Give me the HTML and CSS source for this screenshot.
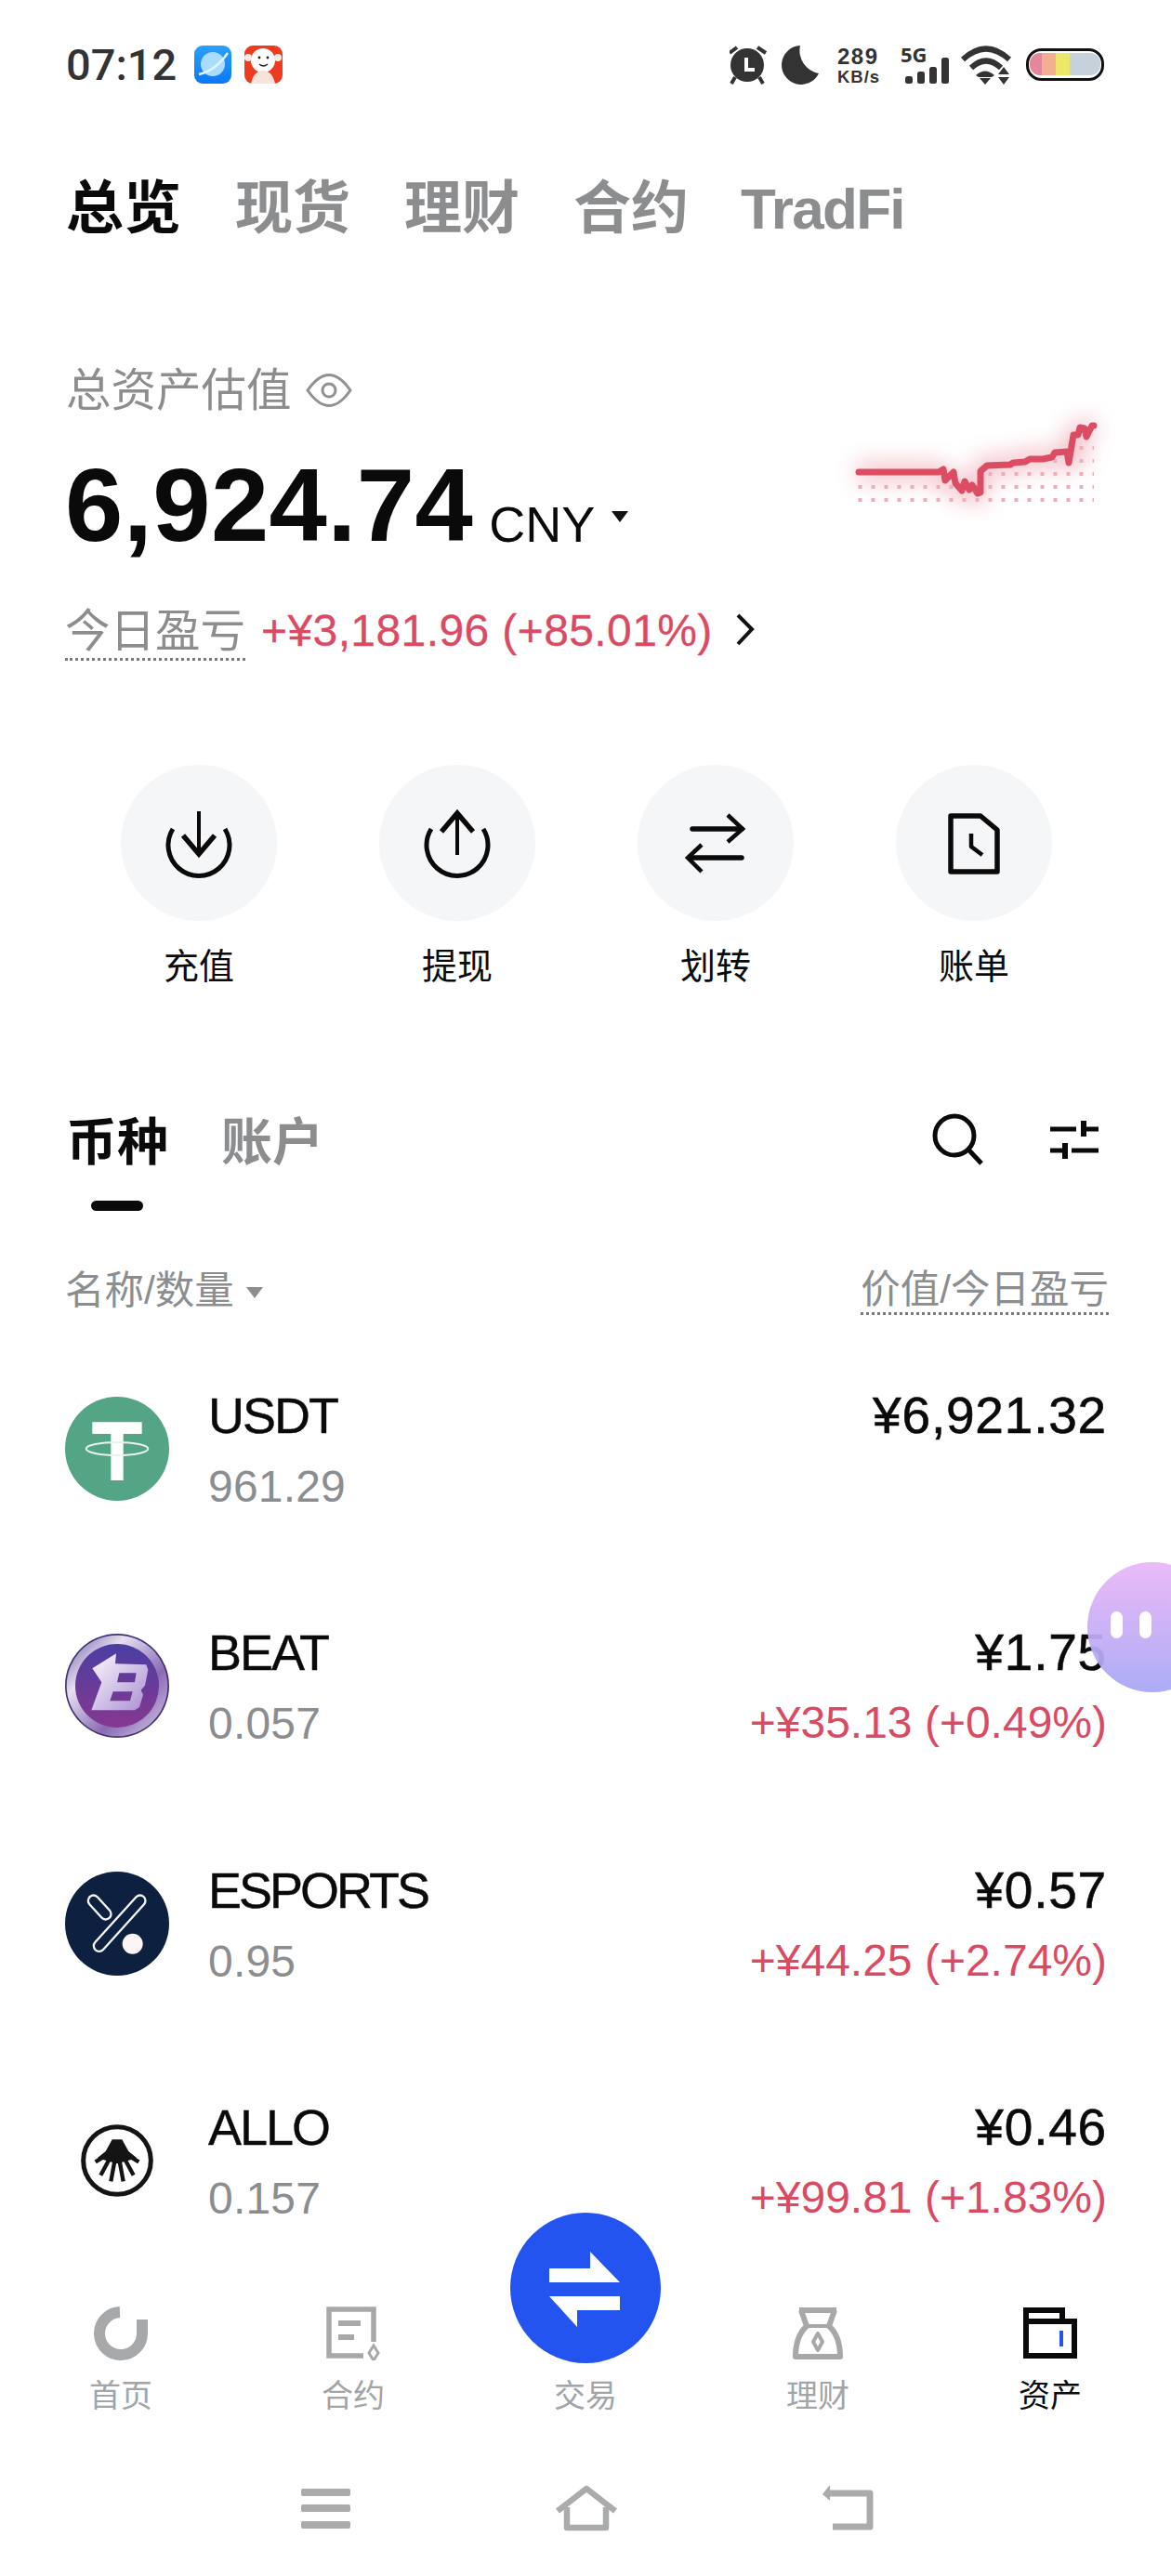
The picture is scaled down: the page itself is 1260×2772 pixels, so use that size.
FILE: index.html
```html
<!DOCTYPE html>
<html lang="zh-CN">
<head>
<meta charset="utf-8">
<title>资产</title>
<link rel="stylesheet" href="styles.css">
</head>
<body>
<div class="page">
  <header class="status">
    <div class="status-left">
      <span class="time">07:12</span>
      <svg class="app-icons" width="96" height="42" viewBox="209 49 96 42">
        <defs><linearGradient id="blueApp" x1="0" y1="0" x2="0" y2="1"><stop offset="0" stop-color="#2ba0fb"/><stop offset="1" stop-color="#0a78f4"/></linearGradient></defs>
        <rect x="209" y="49" width="40" height="41" rx="9" fill="url(#blueApp)"/>
        <circle cx="229" cy="69" r="13" fill="#a9dcfd"/>
        <path d="M214 80 Q232 76 245 57" fill="none" stroke="#e6f5ff" stroke-width="2.500"/>
        <rect x="263" y="49" width="41" height="41" rx="9" fill="#ee3a1e"/>
        <circle cx="283" cy="65" r="13" fill="#fff"/>
        <circle cx="267" cy="62" r="4" fill="#fbe9e2"/><circle cx="299" cy="62" r="4" fill="#fbe9e2"/>
        <path d="M270 90 Q273 76 283 76 Q293 76 296 90Z" fill="#f7e3da"/>
        <circle cx="279" cy="62" r="1.400" fill="#222"/><circle cx="288" cy="62" r="1.400" fill="#222"/>
        <path d="M279 69 Q283.500 73 288 69" fill="none" stroke="#222" stroke-width="1.200"/>
      </svg>
    </div>
    <div class="status-right">
      <svg class="sys-a" width="96" height="42" viewBox="784 49 96 42">
        <g fill="none" stroke="#333" stroke-width="4">
          <path d="M784 57 L792 51"/><path d="M814 51 L823 57"/>
          <path d="M790 83 L786 90"/><path d="M816 83 L820 90"/>
        </g>
        <circle cx="803" cy="70" r="18" fill="#333"/>
        <path d="M802 62 V75 H811" fill="none" stroke="#fff" stroke-width="4"/>
        <path d="M860 49 A21 21 0 1 0 880 79 A25 25 0 0 1 860 49Z" fill="#333"/>
      </svg>
      <div class="speed"><span class="speed-num">289</span><span class="speed-unit">KB/s</span></div>
      <svg class="sys-b" width="222" height="42" viewBox="966 49 222 42">
        <text class="five-g" x="968" y="67">5G</text>
        <g fill="#333">
          <rect x="973" y="82" width="8" height="8" rx="2.500"/>
          <rect x="986" y="77" width="8" height="13" rx="2.500"/>
          <rect x="999" y="72" width="8" height="18" rx="2.500"/>
          <rect x="1012" y="62" width="8" height="28" rx="2.500"/>
        </g>
        <g fill="none" stroke="#333" stroke-width="6">
          <path d="M1035 64 Q1060 41 1085 64"/>
          <path d="M1044 73 Q1060 58 1076 73"/>
        </g>
        <g fill="#333">
          <path d="M1049 81 Q1059 72 1069 81 L1066 83 H1052Z"/>
          <path d="M1053 84 H1065 L1059 91Z"/>
          <path d="M1079 72 L1085 80 H1073Z"/>
          <path d="M1073 83 H1085 L1079 91Z"/>
        </g>
        <rect x="1104.500" y="53.500" width="81" height="32" rx="15" fill="#fff" stroke="#111" stroke-width="3"/>
        <clipPath id="batClip"><rect x="1107" y="57" width="76" height="24" rx="11"/></clipPath>
        <g clip-path="url(#batClip)">
          <rect x="1105" y="57" width="15" height="24" fill="#e5879c"/>
          <rect x="1120" y="57" width="15" height="24" fill="#f2af92"/>
          <rect x="1135" y="57" width="15" height="24" fill="#ece768"/>
          <rect x="1150" y="57" width="35" height="24" fill="#c5d1db"/>
        </g>
      </svg>
    </div>
  </header>

  <nav class="top-tabs">
    <span class="top-tab is-active">总览</span>
    <span class="top-tab">现货</span>
    <span class="top-tab">理财</span>
    <span class="top-tab">合约</span>
    <span class="top-tab top-tab-latin">TradFi</span>
  </nav>

  <section class="summary">
    <div class="summary-main">
      <div class="est">
        <span>总资产估值</span>
        <svg width="50" height="40" viewBox="329 397 50 40"><path d="M331 417 Q354 384 377 417 Q354 450 331 417Z" fill="none" stroke="#8f9193" stroke-width="3"/><circle cx="354" cy="417" r="7" fill="none" stroke="#8f9193" stroke-width="3"/></svg>
      </div>
      <div class="amount"><span class="amount-num">6,924.74</span><span class="amount-cur">CNY</span><i class="caret caret-dark"></i></div>
      <div class="pnl">
        <span class="dotted pnl-label">今日盈亏</span>
        <span class="pnl-value">+¥3,181.96 (+85.01%)</span>
        <svg width="24" height="40" viewBox="790 658 24 40"><path d="M795 662 L810 677 L795 693" fill="none" stroke="#111" stroke-width="4"/></svg>
      </div>
    </div>
    <svg class="spark" width="300" height="140" viewBox="900 420 300 140">
      <defs>
        <filter id="glow" x="-30%" y="-60%" width="160%" height="220%"><feGaussianBlur stdDeviation="12"/></filter>
        <pattern id="dots" x="923.500" y="480" width="14" height="14" patternUnits="userSpaceOnUse"><rect x="0" y="0" width="4" height="4" fill="#ecaeb9"/></pattern>
      </defs>
      <path filter="url(#glow)" opacity=".38" fill="none" stroke="#dd4a62" stroke-width="18" d="M922 508 H1010 L1017 517 L1036 528 L1052 532 L1055 507 L1062 500 L1087 500 L1108 494 L1135 494 L1168 486 L1155 492 L1155 468 L1178 458"/>
      <rect x="923" y="522" width="254" height="19" fill="url(#dots)"/>
      <rect x="1060" y="508" width="117" height="6" fill="url(#dots)"/>
      <rect x="1130" y="494" width="47" height="6" fill="url(#dots)"/>
      <rect x="1160" y="480" width="17" height="6" fill="url(#dots)"/>
      <path fill="none" stroke="#dc4c63" stroke-width="7" stroke-linecap="round" stroke-linejoin="round" d="M924 508 L1010 508 L1015 505 L1017 517 L1026 508 L1028 520 L1035 528 L1038 518 L1043 527 L1046 522 L1052 531 L1055 530 L1055 507 L1062 501 L1087 500 L1090 498 L1103 497 L1108 494 L1122 494 L1132 492 L1135 487 L1148 486 L1150 498 L1155 468 L1160 468 L1162 460 L1167 461 L1169 470 L1175 458 L1177 458"/>
    </svg>
  </section>

  <section class="actions">
    <div class="action">
      <span class="action-ico"><svg width="80" height="80" viewBox="174 867 80 80"><g fill="none" stroke="#0a0a0a" stroke-width="5"><path d="M186 892 A33 33 0 1 0 242 892"/><path d="M214 873 V918" stroke-width="4"/><path d="M197 899 L214 919 L231 899" stroke-width="5.500"/></g></svg></span>
      <span class="action-label">充值</span>
    </div>
    <div class="action">
      <span class="action-ico"><svg width="80" height="80" viewBox="452 867 80 80"><g fill="none" stroke="#0a0a0a" stroke-width="5"><path d="M464 892 A33 33 0 1 0 520 892"/><path d="M492 876 V920" stroke-width="4"/><path d="M475 895 L492 875 L509 895" stroke-width="5.500"/></g></svg></span>
      <span class="action-label">提现</span>
    </div>
    <div class="action">
      <span class="action-ico"><svg width="80" height="80" viewBox="730 867 80 80"><g fill="none" stroke="#0a0a0a" stroke-width="5.500"><path d="M745 892 H798" stroke-linecap="round"/><path d="M783 877 L799 892 L783 906" stroke-width="4.500"/><path d="M798 923 H742" stroke-linecap="round"/><path d="M755 909 L740 923 L755 938" stroke-width="4.500"/></g></svg></span>
      <span class="action-label">划转</span>
    </div>
    <div class="action">
      <span class="action-ico"><svg width="80" height="80" viewBox="1008 867 80 80"><g fill="none" stroke="#0a0a0a" stroke-linejoin="round"><path d="M1023 878 H1055 L1073 893 V938 H1023Z" stroke-width="5.500"/><path d="M1045 897 V911 L1057 920" stroke-width="4.500"/></g></svg></span>
      <span class="action-label">账单</span>
    </div>
  </section>

  <section class="sub-head">
    <div class="sub-tab is-active"><span>币种</span><i class="sub-bar"></i></div>
    <div class="sub-tab"><span>账户</span></div>
    <div class="sub-tools">
      <svg width="62" height="62" viewBox="998 1197 62 62"><g fill="none" stroke="#0a0a0a" stroke-width="5"><circle cx="1025" cy="1223" r="21"/><path d="M1040 1238 L1054 1253"/></g></svg>
      <svg width="54" height="46" viewBox="1128 1205 54 46"><g fill="none" stroke="#0a0a0a" stroke-width="5"><path d="M1129 1216 H1157"/><path d="M1165 1216 H1181"/><path d="M1165 1207 V1224" stroke-width="6"/><path d="M1152 1239 H1181"/><path d="M1129 1239 H1145"/><path d="M1145 1231 V1248" stroke-width="6"/></g></svg>
    </div>
  </section>

  <section class="col-head">
    <div class="col-left"><span>名称/数量</span><i class="caret caret-gray"></i></div>
    <span class="dotted col-right">价值/今日盈亏</span>
  </section>

  <section class="list">
    <div class="row">
      <svg class="coin" width="112" height="112" viewBox="210 190 336 336">
        <circle cx="378" cy="358" r="168" fill="#53a585"/>
        <path d="M298 272 H458 V310 H398 V460 H358 V310 H298Z" fill="#fff"/>
        <ellipse cx="378" cy="358" rx="100" ry="21" fill="none" stroke="#e8f3ee" stroke-width="6"/>
      </svg>
      <div class="row-names"><div class="sym">USDT</div><div class="qty">961.29</div></div>
      <div class="row-vals"><div class="val">¥6,921.32</div><div class="chg"></div></div>
    </div>
    <div class="row">
      <svg class="coin" width="112" height="112" viewBox="60 58 336 336">
        <defs>
          <linearGradient id="beatRing" x1="0" y1="0" x2="1" y2="1"><stop offset="0" stop-color="#6e5aa5"/><stop offset=".3" stop-color="#e8e0f2"/><stop offset=".65" stop-color="#8a6bb5"/><stop offset="1" stop-color="#d9cfe8"/></linearGradient>
          <linearGradient id="beatDisc" x1="0" y1="0" x2="0" y2="1"><stop offset="0" stop-color="#4a3ea3"/><stop offset="1" stop-color="#86388f"/></linearGradient>
          <linearGradient id="beatB" x1="0" y1="0" x2="1" y2="1"><stop offset="0" stop-color="#fbf8ff"/><stop offset="1" stop-color="#a98fd0"/></linearGradient>
        </defs>
        <circle cx="228" cy="226" r="168" fill="#3f3272"/>
        <circle cx="228" cy="226" r="163" fill="url(#beatRing)"/>
        <circle cx="228" cy="226" r="135" fill="url(#beatDisc)"/>
        <path fill="url(#beatB)" fill-rule="evenodd" d="M148 170 L225 122 L222 155 L322 158 L328 175 L318 225 L305 240 L312 255 L300 295 L285 305 L145 305 L178 215Z M235 185 L290 185 L285 215 L228 215Z M215 245 L278 245 L270 275 L205 275Z"/>
      </svg>
      <div class="row-names"><div class="sym">BEAT</div><div class="qty">0.057</div></div>
      <div class="row-vals"><div class="val">¥1.75</div><div class="chg">+¥35.13 (+0.49%)</div></div>
    </div>
    <div class="row">
      <svg class="coin" width="112" height="112" viewBox="210 103 336 336">
        <circle cx="378" cy="271" r="168" fill="#0e2040"/>
        <g fill="none" stroke-linecap="round">
          <path d="M452 197 L320 343" stroke="#f4f4f6" stroke-width="42"/>
          <path d="M452 197 L320 343" stroke="#0e2040" stroke-width="28"/>
          <path d="M302 197 L341 240" stroke="#f4f4f6" stroke-width="42"/>
          <path d="M302 197 L341 240" stroke="#0e2040" stroke-width="28"/>
        </g>
        <circle cx="428" cy="336" r="33" fill="#fbf5f6"/>
      </svg>
      <div class="row-names"><div class="sym sym-tight">ESPORTS</div><div class="qty">0.95</div></div>
      <div class="row-vals"><div class="val">¥0.57</div><div class="chg">+¥44.25 (+2.74%)</div></div>
    </div>
    <div class="row">
      <svg class="coin" width="112" height="112" viewBox="210 870 336 336">
        <circle cx="378" cy="1038" r="109" fill="#fff" stroke="#141414" stroke-width="15"/>
        <path d="M362 970 H394 L415 1008 L442 1030 L378 1048 L314 1030 L341 1008Z" fill="#141414"/>
        <g fill="none" stroke="#141414" stroke-width="13">
          <path d="M345 1020 L308 1042"/><path d="M411 1020 L448 1042"/>
          <path d="M355 1030 L325 1085"/><path d="M401 1030 L431 1085"/>
          <path d="M370 1040 L358 1105"/><path d="M386 1040 L398 1105"/>
        </g>
      </svg>
      <div class="row-names"><div class="sym">ALLO</div><div class="qty">0.157</div></div>
      <div class="row-vals"><div class="val">¥0.46</div><div class="chg">+¥99.81 (+1.83%)</div></div>
    </div>
  </section>

  <nav class="tabbar">
    <div class="tabbar-item">
      <svg width="64" height="58" viewBox="99 2482 64 58"><path d="M130 2488 A23 23 0 1 0 154 2511" fill="none" stroke="#a6a8aa" stroke-width="12"/><rect x="148" y="2496" width="12" height="16" fill="#a6a8aa"/></svg>
      <span>首页</span>
    </div>
    <div class="tabbar-item">
      <svg width="64" height="58" viewBox="349 2482 64 58"><g fill="none" stroke="#a6a8aa" stroke-width="5.500"><path d="M392 2535 H355 V2485 H403 V2520"/></g><rect x="365" y="2497" width="24" height="6" fill="#a6a8aa"/><rect x="365" y="2512" width="17" height="6" fill="#a6a8aa"/><path d="M403 2524 L408 2532 L403 2540 L398 2532Z" fill="none" stroke="#a6a8aa" stroke-width="3"/></svg>
      <span>合约</span>
    </div>
    <div class="tabbar-item tabbar-trade">
      <svg class="trade-btn" width="162" height="162" viewBox="550 2381 162 162">
        <circle cx="631" cy="2462" r="81" fill="#2354f0"/>
        <path d="M592 2441 H636 V2423 L668 2456 H592Z" fill="#fff"/>
        <path d="M668 2471 H592 L622 2504 V2486 H668Z" fill="#fff"/>
      </svg>
      <span>交易</span>
    </div>
    <div class="tabbar-item">
      <svg width="64" height="58" viewBox="848 2482 64 58"><g fill="none" stroke="#a6a8aa" stroke-width="6" stroke-linejoin="round"><path d="M860 2486 H900"/><path d="M862 2486 L868 2503 Q856 2514 856 2536 H904 Q904 2514 892 2503 L898 2486"/><path d="M868 2503 H892" stroke-width="4"/><path d="M880 2511 L885 2520 L880 2529 L875 2520Z" stroke-width="4"/></g></svg>
      <span>理财</span>
    </div>
    <div class="tabbar-item is-active">
      <svg width="64" height="58" viewBox="1098 2482 64 58"><g fill="none" stroke="#0a0a0a" stroke-width="6"><path d="M1104 2498 V2486 H1143 V2498"/><path d="M1104 2498 H1156 V2535 H1104Z"/></g><rect x="1140" y="2508" width="4" height="17" fill="#2354f0"/></svg>
      <span>资产</span>
    </div>
  </nav>

  <footer class="sysnav">
    <svg width="60" height="50" viewBox="321 2674 60 50"><g fill="#a9abad"><rect x="324" y="2678" width="53" height="8" rx="2"/><rect x="324" y="2695" width="53" height="8" rx="2"/><rect x="324" y="2713" width="53" height="8" rx="2"/></g></svg>
    <svg width="70" height="50" viewBox="596 2674 70 50"><path d="M600 2702 L631 2678 L662 2702 M610 2698 V2720 H652 V2698" fill="none" stroke="#a9abad" stroke-width="6.500" stroke-linejoin="round"/></svg>
    <svg width="62" height="50" viewBox="882 2674 62 50"><path d="M892 2683 H936 V2719 H896" fill="none" stroke="#a9abad" stroke-width="7" stroke-linejoin="round"/><path d="M893 2674 L885 2684 L893 2691Z" fill="#a9abad"/></svg>
  </footer>

  <div class="bubble"><i></i><i></i></div>
</div>
</body>
</html>
```

FILE: styles.css
```css
* { box-sizing: border-box; }
html, body { margin: 0; padding: 0; background: #fff; }
body { font-family: "Liberation Sans", "Noto Sans CJK SC", sans-serif; color: #0a0a0a; }
svg { display: block; flex: none; }
i { display: block; font-style: normal; }

.page {
  position: relative;
  width: 1260px;
  height: 2772px;
  overflow: hidden;
  background: #fff;
}

/* status bar */
.status {
  display: flex;
  justify-content: space-between;
  height: 90px;
  padding: 49px 72px 0 71px;
}
.status-left, .status-right { display: flex; align-items: flex-start; }
.time {
  font-family: Roboto, sans-serif;
  font-weight: 500;
  font-size: 47px;
  line-height: 41px;
  color: #333;
  width: 138px;
}
.status-right { margin-right: -1px; }
.sys-b { overflow: visible; }
.speed { display: flex; flex-direction: column; width: 66px; margin: 1px 0 0 20px; color: #333; font-family: "Liberation Sans", sans-serif; font-weight: 700; line-height: 22px; }
.speed-num { font-size: 24px; letter-spacing: 1.500px; }
.speed-unit { font-size: 18.500px; letter-spacing: 1px; }
.five-g { font: 700 22px "Noto Sans", sans-serif; fill: #333; }

/* top tabs */
.top-tabs {
  display: flex;
  gap: 58px;
  margin-top: 95px;
  padding-left: 71px;
  height: 80px;
  font-size: 62px;
  line-height: 80px;
  font-weight: 700;
  color: #8b8d8f;
}
.top-tab.is-active { color: #0a0a0a; }
.top-tab-latin { letter-spacing: -1.700px; margin-left: -2px; }

/* summary */
.summary { display: flex; justify-content: space-between; margin-top: 125px; padding: 0 60px 0 70px; height: 320px; }
.summary-main { display: flex; flex-direction: column; }
.est { display: flex; align-items: center; gap: 15px; height: 60px; font-size: 48.500px; line-height: 60px; color: #8b8d8f; padding-left: 1px; }
.amount { display: flex; align-items: baseline; margin-top: 29px; height: 130px; line-height: 130px; }
.amount-num { font-size: 112px; font-weight: 700; color: #0a0a0a; letter-spacing: .4px; }
.amount-cur { font-size: 54px; margin-left: 17px; position: relative; top: 1px; }
.caret { width: 0; height: 0; border-style: solid; border-color: transparent; }
.caret-dark { border-width: 12px 9.500px 0; border-top-color: #111; margin-left: 18px; align-self: center; margin-top: 24px; }
.caret-gray { border-width: 12px 9px 0; border-top-color: #8b8d8f; margin-top: 4px; }
.pnl { display: flex; align-items: flex-start; margin-top: 41px; height: 60px; }
.dotted { display: block; color: #8b8d8f; border-bottom: 3px dotted #77797b; }
.pnl-label { font-size: 48.500px; line-height: 58px; }
.pnl-value { font-size: 48px; line-height: 58px; color: #db4a63; margin-left: 17px; letter-spacing: .4px; -webkit-text-stroke: .3px #db4a63; }
.pnl svg { margin: 8px 0 0 22px; }
.spark { margin-top: 30px; }

/* actions */
.actions { display: grid; grid-template-columns: repeat(4, 278px); margin-top: 113px; padding-left: 75px; }
.action { display: flex; flex-direction: column; align-items: center; }
.action-ico { display: flex; align-items: center; justify-content: center; width: 168px; height: 168px; border-radius: 50%; background: #f5f6f7; }
.action-label { margin-top: 24px; font-size: 38px; line-height: 50px; }

/* sub tabs */
.sub-head { display: flex; align-items: flex-start; gap: 57px; margin-top: 129px; padding: 0 77px 0 71px; height: 109px; font-size: 55px; line-height: 70px; font-weight: 700; color: #8b8d8f; }
.sub-tab { display: flex; flex-direction: column; align-items: center; }
.sub-tab.is-active { color: #0a0a0a; }
.sub-bar { width: 56px; height: 11px; margin-top: 28px; border-radius: 6px; background: #0a0a0a; }
.sub-tools { display: flex; align-items: center; gap: 67px; margin-left: auto; height: 70px; margin-top: -2px; }

/* column header */
.col-head { display: flex; justify-content: space-between; align-items: flex-start; margin-top: 60px; padding: 0 67px 0 70px; font-size: 42.500px; color: #8b8d8f; }
.col-left { display: flex; align-items: center; gap: 13px; line-height: 50px; margin-top: 1px; }
.col-right { line-height: 49px; }

/* list */
.list { margin-top: 16px; height: 1022px; overflow: hidden; }
.row { display: flex; align-items: center; height: 255.500px; padding: 0 69px 0 70px; }
.coin { margin-right: 42px; }
.row-names { flex: 1; }
.sym { font-size: 54px; line-height: 70px; -webkit-text-stroke: .4px #0a0a0a; letter-spacing: -2px; }
.sym-tight { letter-spacing: -3px; }
.qty { margin-top: 12px; font-size: 48px; line-height: 60px; color: #8b8d8f; letter-spacing: .2px; }
.row-vals { text-align: right; }
.val { font-size: 55px; line-height: 70px; -webkit-text-stroke: .6px #0a0a0a; letter-spacing: .8px; }
.chg { margin-top: 11px; margin-bottom: 1px; min-height: 60px; font-size: 48px; line-height: 60px; color: #db4a63; }

/* bottom tabs */
.tabbar { display: grid; grid-template-columns: repeat(5, 250px); margin-top: 0; padding: 29px 5px 0; }
.tabbar-item { position: relative; display: flex; flex-direction: column; align-items: center; font-size: 34px; line-height: 44px; color: #a2a4a6; }
.tabbar-item span { margin-top: 16px; }
.tabbar-item.is-active { color: #0a0a0a; }
.tabbar-trade { padding-top: 74px; }
.tabbar-trade span { margin-top: 0; }
.trade-btn { position: absolute; top: -101px; left: 44px; }

/* system nav */
.sysnav { display: flex; align-items: flex-start; margin-top: 74px; padding-left: 321px; }
.sysnav svg:nth-child(2) { margin-left: 215px; }
.sysnav svg:nth-child(3) { margin-left: 216px; }

/* floating assistant */
.bubble {
  position: absolute;
  top: 1681px;
  left: 1170px;
  display: flex;
  gap: 18px;
  padding: 53px 0 0 25px;
  width: 140px;
  height: 140px;
  border-radius: 50%;
  background: linear-gradient(#eab6f8, #a6a6f5);
  opacity: .93;
}
.bubble i { width: 13px; height: 29px; border-radius: 7px; background: #fff; }
```
